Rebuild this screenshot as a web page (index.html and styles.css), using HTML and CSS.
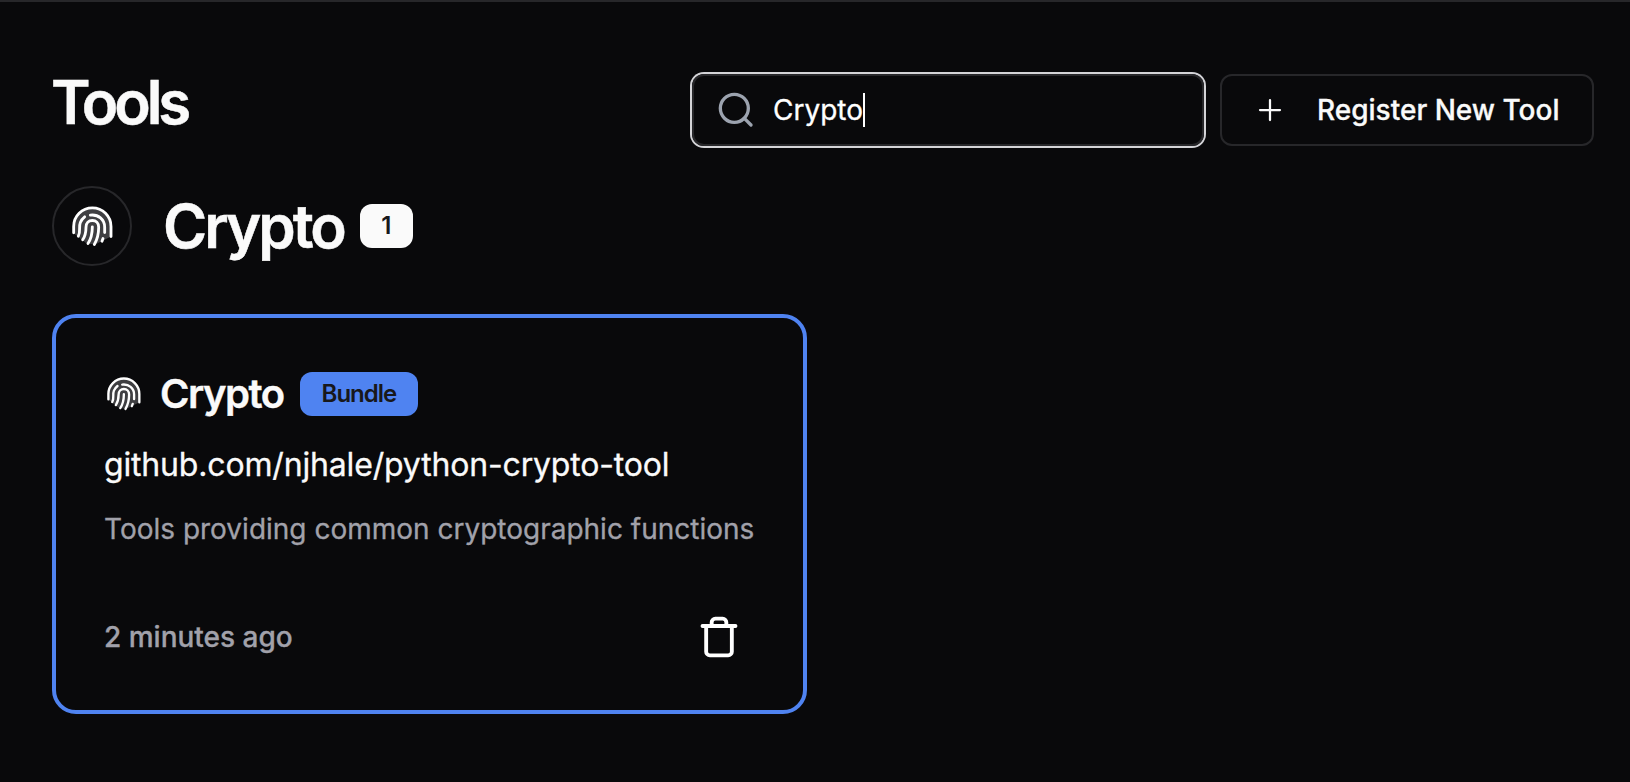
FILE: index.html
```html
<!DOCTYPE html>
<html lang="en">
<head>
<meta charset="utf-8">
<title>Tools</title>
<link rel="stylesheet" href="styles.css">
</head>
<body>
<svg width="0" height="0" class="defs">
  <symbol id="fingerprint" viewBox="10 12 123 120">
    <path class="fp-base" d="M15 92V72a56 56 0 0 1 112 0v30l-28 14-20 10-26-4-18-14z"/>
    <g class="fp-lines">
      <path d="M15 91V72a56 56 0 0 1 112 0v30"/>
      <path d="M29 101C37 86 29 75 35 60q4-10 13-17"/>
      <path d="M65 38c24-3 43 13 43 36v16"/>
      <path d="M42 112C50 100 52 88 52 74c0-12 8-20 19-20s19 8 19 20c0 18-1 31-13 52"/>
      <path d="M71 73c0 20-2 34-13 50"/>
      <path d="M103 108l-3 8"/>
    </g>
  </symbol>
</svg>
<main class="page">
  <header class="header">
    <h1 class="heading page-title">Tools</h1>
    <div class="actions">
      <div class="search">
        <svg class="search-icon" viewBox="0 0 24 24"><circle cx="11" cy="11" r="8.4"/><path d="m21 21-4-4"/></svg>
        <span class="search-text">Crypto</span><span class="caret"></span>
      </div>
      <button class="register">
        <svg class="plus" viewBox="0 0 24 24"><path d="M4 12h16M12 4v16"/></svg>
        <span>Register New Tool</span>
      </button>
    </div>
  </header>
  <section>
    <div class="category">
      <span class="avatar"><svg class="avatar-icon"><use href="#fingerprint"/></svg></span>
      <h2 class="heading category-name">Crypto</h2>
      <span class="badge count">1</span>
    </div>
    <article class="card">
      <div class="card-title">
        <svg class="card-icon"><use href="#fingerprint"/></svg>
        <h3 class="card-name">Crypto</h3>
        <span class="badge bundle">Bundle</span>
      </div>
      <p class="link">github.com/njhale/python-crypto-tool</p>
      <p class="description">Tools providing common cryptographic functions</p>
      <div class="card-footer">
        <span class="time">2 minutes ago</span>
        <svg class="trash" viewBox="0 0 24 24"><path d="M3 6h18M19 6v14a2 2 0 0 1-2 2H7a2 2 0 0 1-2-2V6M8 6V4a2 2 0 0 1 2-2h4a2 2 0 0 1 2 2v2"/></svg>
      </div>
    </article>
  </section>
</main>
</body>
</html>
```
FILE: styles.css
```css
* { box-sizing: border-box; margin: 0; }
body {
  background: #09090b;
  color: #fafafa;
  font-family: Inter, "Liberation Sans", sans-serif;
  -webkit-font-smoothing: antialiased;
}
svg { fill: none; stroke: currentColor; stroke-linecap: round; stroke-linejoin: round; flex: none; }
.defs { display: block; height: 0; }
.page { height: 782px; border-top: 2px solid #27272a; padding: 70px 36px 0 52px; }
.header { display: flex; justify-content: space-between; height: 76px; align-items: flex-start; }
.heading { font-size: 60px; line-height: 72px; font-weight: 600; -webkit-text-stroke: 0.5px currentColor; }
.page-title { margin: -6px 0 0 -1px; letter-spacing: -4.1px; }
.category-name { margin-left: 31px; letter-spacing: -3px; }
.actions { display: flex; gap: 16px; padding-top: 2px; }
.search {
  display: flex; align-items: center;
  width: 512px; height: 72px; padding-left: 22px;
  border: 2px solid #27272a; border-radius: 12px;
  box-shadow: 0 0 0 2px #d4d4d8;
  font-size: 28px; line-height: 40px;
}
.search-icon { width: 40px; height: 40px; color: #9ca3af; stroke-width: 2; margin-right: 17px; }
.search-text { color: #fff; -webkit-text-stroke: 0.3px currentColor; }
.caret { width: 2px; height: 34px; background: #fff; }
.register {
  display: flex; align-items: center; gap: 32px;
  width: 374px; height: 72px; padding: 0 32px 0 33px;
  background: transparent; color: inherit;
  border: 2px solid #27272a; border-radius: 12px;
  font: 500 28px/40px Inter, sans-serif; white-space: nowrap;
  -webkit-text-stroke: 0.3px currentColor;
}
.plus { width: 30px; height: 30px; stroke-width: 1.8; }
.category { display: flex; align-items: center; height: 80px; margin-top: 38px; }
.avatar {
  display: flex; align-items: center; justify-content: center;
  width: 80px; height: 80px; border: 2px solid #27272a; border-radius: 50%;
}
.avatar-icon { width: 41px; height: 41px; }
.badge {
  display: flex; align-items: center; justify-content: center;
  height: 44px; padding: 0 22px 2px; border-radius: 12px; margin-left: 16px;
  color: #18181b; font-size: 24px; font-weight: 600; letter-spacing: -1px;
}
.count { width: 53px; padding: 0 0 2px; background: #fafafa; letter-spacing: 0; }
.bundle { background: #4f83f1; }
.card {
  width: 755px; height: 400px; margin-top: 48px; padding: 54px 48px 0 48px;
  border: 4px solid #4f83f1; border-radius: 24px;
}
.card-title { display: flex; align-items: center; height: 44px; }
.card-icon { width: 34px; height: 34px; margin: 0 19px 0 3px; }
.fp-base { fill: #3f3f42; stroke: none; }
.fp-lines { stroke: #fff; stroke-width: 8.5; }
.card-name { font-size: 40px; line-height: 44px; font-weight: 600; letter-spacing: -1.5px; -webkit-text-stroke: 0.4px currentColor; }
.link { margin-top: 25px; font-size: 32px; line-height: 48px; letter-spacing: -0.165px; -webkit-text-stroke: 0.3px currentColor; }
.description { margin-top: 20px; font-size: 28px; line-height: 40px; color: #a1a1aa; white-space: nowrap; -webkit-text-stroke: 0.3px currentColor; }
.card-footer { display: flex; align-items: center; justify-content: space-between; height: 72px; margin-top: 52px; }
.time { font-size: 28px; font-weight: 500; color: #a1a1aa; -webkit-text-stroke: 0.3px currentColor; }
.trash { width: 44px; height: 44px; margin-right: 14px; stroke-width: 2.1; color: #fff; }
```
